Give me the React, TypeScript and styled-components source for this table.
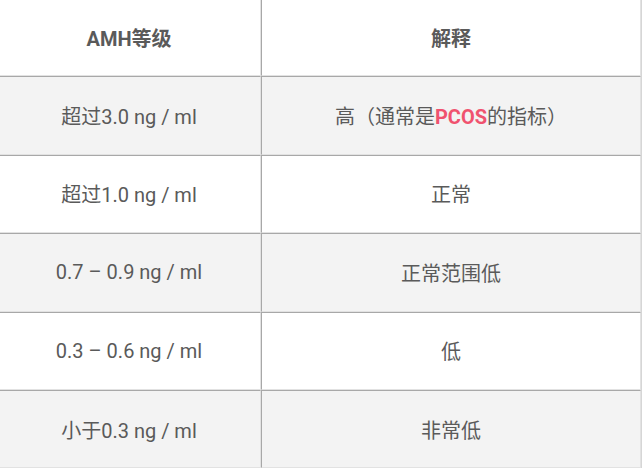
import React from "react";
import styled, { createGlobalStyle } from "styled-components";

const GlobalStyle = createGlobalStyle`
  html, body {
    margin: 0;
    padding: 0;
    background: #ffffff;
    overflow: hidden;
  }
  body {
    font-family: Roboto, "Noto Sans CJK SC", sans-serif;
  }
`;

const Wrap = styled.div`
  margin: -2px 0 0 -3px;
  width: 645px;
`;

const Table = styled.table`
  width: 645px;
  border-collapse: separate;
  border-spacing: 0;
  border-right: 1px solid #d6d6d6;
  table-layout: fixed;
  color: #5a5a5a;
  font-size: 20px;
`;

const Row = styled.tr<{ $shaded?: boolean }>`
  background: ${(p) => (p.$shaded ? "#f3f3f3" : "#ffffff")};
`;

const Cell = styled.td<{ $head?: boolean }>`
  height: 76.4px;
  padding: 0;
  text-align: center;
  vertical-align: middle;
  font-weight: ${(p) => (p.$head ? 700 : 400)};
  border-top: 1px solid #a8a8a8;
  border-left: 1px solid #a8a8a8;
  border-bottom: 1px solid #e2e2e2;
  border-right: 1px solid #e2e2e2;
`;

const Mark = styled.span`
  color: #f0526f;
  font-weight: 700;
`;

const rows: [string, React.ReactNode][] = [
  ["超过3.0 ng / ml", <>高（通常是<Mark>PCOS</Mark>的指标）</>],
  ["超过1.0 ng / ml", "正常"],
  ["0.7 – 0.9 ng / ml", "正常范围低"],
  ["0.3 – 0.6 ng / ml", "低"],
  ["小于0.3 ng / ml", "非常低"],
];

export default function App() {
  return (
    <Wrap>
      <GlobalStyle />
      <Table>
        <colgroup>
          <col style={{ width: 264 }} />
          <col />
        </colgroup>
        <tbody>
          <Row>
            <Cell $head>AMH等级</Cell>
            <Cell $head>解释</Cell>
          </Row>
          {rows.map(([level, meaning], i) => (
            <Row key={i} $shaded={i % 2 === 0}>
              <Cell>{level}</Cell>
              <Cell>{meaning}</Cell>
            </Row>
          ))}
        </tbody>
      </Table>
    </Wrap>
  );
}
